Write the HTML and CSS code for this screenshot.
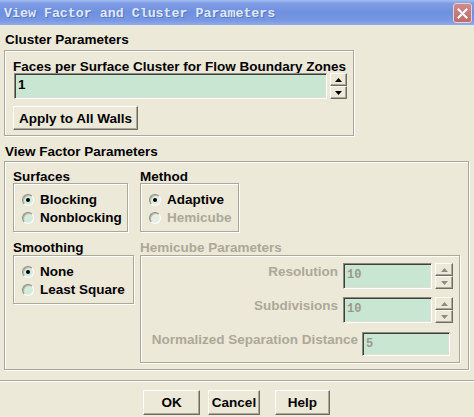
FILE: index.html
```html
<!DOCTYPE html>
<html>
<head>
<meta charset="utf-8">
<link rel="stylesheet" href="styles.css">
</head>
<body>
<div class="window">
  <div class="titlebar">
    <span class="title">View Factor and Cluster Parameters</span>
    <span class="close"><svg width="11" height="11" viewBox="0 0 11 11"><path d="M1.5 1.5 L9.5 9.5 M9.5 1.5 L1.5 9.5" stroke="#fff" stroke-width="2" stroke-linecap="square"/></svg></span>
  </div>
  <div class="content">
    <div class="sec-label sec-cluster">Cluster Parameters</div>
    <div class="group cluster">
      <div class="lbl">Faces per Surface Cluster for Flow Boundary Zones</div>
      <div class="field-row">
        <div class="input cluster-input">1</div>
        <div class="spin">
          <span class="spin-btn"><svg width="7" height="4" viewBox="0 0 7 4"><polygon points="3.5,0 7,4 0,4" fill="#000"/></svg></span>
          <span class="spin-btn"><svg width="7" height="4" viewBox="0 0 7 4"><polygon points="0,0 7,0 3.5,4" fill="#000"/></svg></span>
        </div>
      </div>
      <div class="btn apply">Apply to All Walls</div>
    </div>

    <div class="sec-label sec-vf">View Factor Parameters</div>
    <div class="group vf">
      <div class="vf-grid">
        <div class="sub">
          <div class="lbl">Surfaces</div>
          <div class="group radios surfaces">
            <div class="radio-row"><span class="radio on"></span>Blocking</div>
            <div class="radio-row"><span class="radio"></span>Nonblocking</div>
          </div>
        </div>
        <div class="sub">
          <div class="lbl">Method</div>
          <div class="group radios method">
            <div class="radio-row"><span class="radio on dis-radio"></span>Adaptive</div>
            <div class="radio-row dis"><span class="radio dis-radio"></span>Hemicube</div>
          </div>
        </div>
        <div class="sub">
          <div class="lbl">Smoothing</div>
          <div class="group radios smoothing">
            <div class="radio-row"><span class="radio on"></span>None</div>
            <div class="radio-row"><span class="radio"></span>Least Square</div>
          </div>
        </div>
        <div class="sub">
          <div class="lbl dis">Hemicube Parameters</div>
          <div class="group hemi">
            <div class="hrow">
              <span class="hl dis">Resolution</span>
              <div class="input hin">10</div>
              <div class="spin hspin">
                <span class="spin-btn"><svg width="7" height="4" viewBox="0 0 7 4"><polygon points="3.5,0 7,4 0,4" fill="#8E8C80"/></svg></span>
                <span class="spin-btn"><svg width="7" height="4" viewBox="0 0 7 4"><polygon points="0,0 7,0 3.5,4" fill="#8E8C80"/></svg></span>
              </div>
            </div>
            <div class="hrow hrow2">
              <span class="hl dis">Subdivisions</span>
              <div class="input hin">10</div>
              <div class="spin hspin">
                <span class="spin-btn"><svg width="7" height="4" viewBox="0 0 7 4"><polygon points="3.5,0 7,4 0,4" fill="#8E8C80"/></svg></span>
                <span class="spin-btn"><svg width="7" height="4" viewBox="0 0 7 4"><polygon points="0,0 7,0 3.5,4" fill="#8E8C80"/></svg></span>
              </div>
            </div>
            <div class="hrow hrow3">
              <span class="hl hl3 dis">Normalized Separation Distance</span>
              <div class="input hin hin3">5</div>
            </div>
          </div>
        </div>
      </div>
    </div>
  </div>
  <div class="separator"></div>
  <div class="buttons">
    <div class="btn b-ok">OK</div>
    <div class="btn b-cancel">Cancel</div>
    <div class="btn b-help">Help</div>
  </div>
</div>
</body>
</html>
```

FILE: styles.css
```css
* { box-sizing: border-box; }
html, body { margin: 0; padding: 0; }
body {
  background: #ECE9D8;
  font-family: "Liberation Sans", Arial, sans-serif;
  font-size: 13.5px;
  font-weight: bold;
  color: #000;
  white-space: nowrap;
}
.window {
  width: 474px;
  height: 417px;
  background: #ECE9D8;
  overflow: hidden;
}
.titlebar {
  height: 25px;
  display: flex;
  align-items: center;
  justify-content: space-between;
  padding: 0 2px 0 4px;
  background: linear-gradient(to bottom, #A3BDEE 0%, #7D9CE3 14%, #6E90DF 50%, #7898E3 82%, #8EACEA 100%);
}
.title {
  font-family: "Liberation Mono", "Courier New", monospace;
  font-weight: bold;
  font-size: 13.3px;
  color: #DFE8FA;
  text-shadow: 1px 1px 0 #5A74BC;
  margin-top: 1px;
}
.close {
  flex-shrink: 0;
  width: 19px;
  height: 20px;
  margin-top: 1px;
  border: 1px solid #EAD0D0;
  border-radius: 3px;
  background: linear-gradient(to bottom, #D08A8A, #C06C6C);
  display: flex;
  align-items: center;
  justify-content: center;
}
.content { padding-left: 4px; }
.sec-label { line-height: 14px; margin-left: 1px; }
.sec-cluster { margin-top: 8px; }
.sec-vf { margin-top: 9px; }
.group {
  border: 1px solid #ACA899;
  box-shadow: inset 1px 1px 0 #fff, 1px 1px 0 #fff;
}
.lbl { line-height: 13px; }
.cluster {
  width: 350px;
  margin-top: 3px;
  padding: 9px 7px 5px 8px;
}
.field-row {
  display: flex;
  gap: 3px;
  margin-left: 1px;
}
.input {
  flex-shrink: 0;
  height: 26px;
  background: #C8E6D1;
  border: 1px solid;
  border-color: #8C8A80 #fff #fff #8C8A80;
  box-shadow: inset 1px 1px 0 #404040, inset -1px -1px 0 #E2DFD2;
  padding: 3px 0 0 3px;
  line-height: 16px;
}
.cluster-input { width: 313px; }
.spin {
  flex-shrink: 0;
  display: flex;
  flex-direction: column;
  width: 17px;
  height: 26px;
}
.spin-btn {
  flex: 1;
  display: flex;
  align-items: center;
  justify-content: center;
  background: #ECE9D8;
  border: 1px solid;
  border-color: #fff #6E6C64 #6E6C64 #fff;
  box-shadow: inset -1px -1px 0 #ACA899;
}
.btn {
  display: flex;
  align-items: center;
  justify-content: center;
  background: #ECE9D8;
  border: 1px solid;
  border-color: #fff #6E6C64 #6E6C64 #fff;
  box-shadow: inset -1px -1px 0 #ACA899;
}
.apply {
  width: 125px;
  height: 24px;
  margin-top: 7px;
}
.vf {
  width: 465px;
  margin-top: 2px;
  padding: 8px 8px 6px 8px;
}
.vf-grid {
  display: grid;
  grid-template-columns: 127px 1fr;
  row-gap: 9px;
}
.radios {
  height: 49px;
  padding: 7px 0 0 8px;
}
.surfaces { width: 115px; }
.method { width: 99px; }
.smoothing { width: 121px; margin-top: 1px; }
.radio-row {
  display: flex;
  align-items: center;
  height: 18px;
  line-height: 18px;
}
.radio {
  position: relative;
  flex-shrink: 0;
  width: 12px;
  height: 12px;
  margin-right: 6px;
  border-radius: 50%;
  background: #D3ECDB;
  border: 1px solid;
  border-color: #8C8A80 #fff #fff #8C8A80;
  box-shadow: inset 1px 1px 0 #B8B6AA;
}
.radio.dis-radio { background: #E4EFE2; }
.radio.on::after {
  content: "";
  position: absolute;
  left: 3px;
  top: 3px;
  width: 4px;
  height: 4px;
  border-radius: 50%;
  background: #000;
}
.dis { color: #ACA899; }
.hemi {
  width: 320px;
  height: 108px;
  margin-top: 1px;
  padding: 7px 6px 0 0;
}
.hrow {
  display: flex;
  justify-content: flex-end;
  align-items: flex-start;
}
.hrow2 { margin-top: 8px; }
.hrow3 { margin-top: 9px; margin-right: 3px; }
.hl {
  padding-top: 2px;
  line-height: 14px;
  margin-right: 5px;
}
.hl3 { padding-top: 1px; margin-right: 4px; }
.hin {
  width: 89px;
  font-family: "Liberation Mono", "Courier New", monospace;
  font-size: 12px;
  line-height: 14px;
  color: #9A988C;
  padding: 4px 0 0 3px;
}
.hin3 { width: 88px; height: 24px; }
.hspin { width: 18px; margin-left: 3px; }
.separator {
  margin-top: 10px;
  height: 2px;
  border-top: 1px solid #ACA899;
  border-bottom: 1px solid #fff;
}
.buttons {
  display: flex;
  margin-top: 8px;
}
.buttons .btn { height: 25px; }
.b-ok { width: 57px; margin-left: 143px; }
.b-cancel { width: 52px; margin-left: 8px; }
.b-help { width: 55px; margin-left: 15px; }
```
